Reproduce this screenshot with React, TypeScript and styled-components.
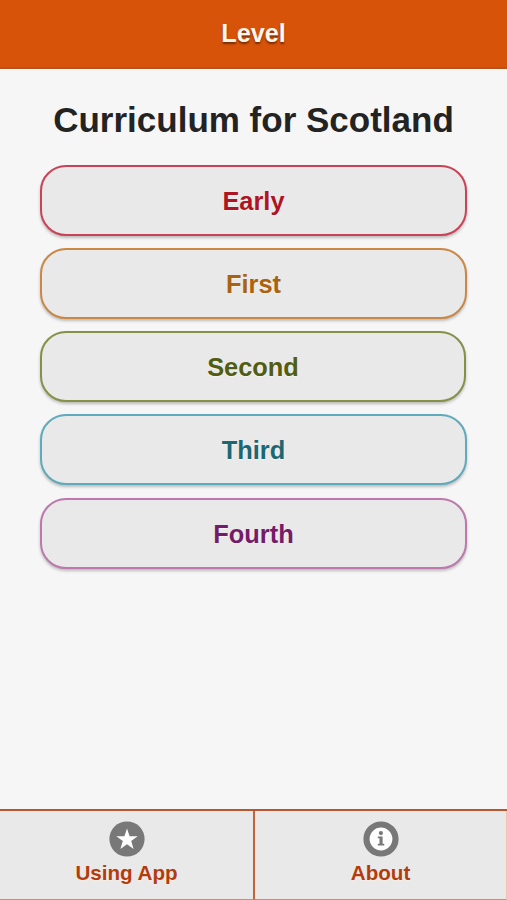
import React from "react";
import styled, { createGlobalStyle } from "styled-components";

const GlobalStyle = createGlobalStyle`
  * { box-sizing: border-box; }
  body {
    margin: 0;
    background: #f6f6f6;
    font-family: "Liberation Sans", Arial, Helvetica, sans-serif;
    font-weight: 700;
  }
`;

const Screen = styled.div`
  display: flex;
  flex-direction: column;
  width: 507px;
  height: 900px;
  overflow: hidden;
`;

const Header = styled.header`
  display: flex;
  align-items: center;
  justify-content: center;
  height: 69px;
  padding-bottom: 1px;
  background: #d7530a;
  border-bottom: 2px solid #b7531f;
  color: #fff5ec;
  font-size: 25.2px;
  line-height: 30px;
  text-shadow: 0 2px 2px rgba(70, 25, 0, 0.65);
`;

const Content = styled.main`
  flex: 1;
  padding: 30px 40px 0;
`;

const Title = styled.h1`
  margin: 0 -10px;
  font-size: 35px;
  line-height: 42px;
  color: #232323;
  text-align: center;
  white-space: nowrap;
`;

const Levels = styled.nav`
  display: flex;
  flex-direction: column;
  align-items: flex-start;
  gap: 12.25px;
  margin-top: 23.5px;
`;

const LevelButton = styled.button<{ $line: string; $ink: string; $width?: number }>`
  width: ${(p) => p.$width ?? 427}px;
  height: 71px;
  padding: 1px 0 0;
  border: 2px solid ${(p) => p.$line};
  border-radius: 26px;
  background: #e9e9e9;
  box-shadow: 0 2px 3px rgba(0, 0, 0, 0.24);
  color: ${(p) => p.$ink};
  font: 700 25.4px/30px "Liberation Sans", Arial, sans-serif;
  text-shadow: 0 1px 1px #f6f3ee;
`;

const Footer = styled.footer`
  display: grid;
  grid-template-columns: 255px 252px;
  height: 91px;
  border-top: 2px solid #b7562f;
`;

const Tab = styled.button`
  display: flex;
  flex-direction: column;
  align-items: center;
  padding: 10px 0 0;
  border: 0;
  border-right: 2px solid #c4623a;
  border-bottom: 1px solid #d98a63;
  background: #e9e9e9;
  color: #b23c0d;
  font: 700 20.6px/24px "Liberation Sans", Arial, sans-serif;
  text-shadow: 0 1px 1px #f9eee7;

  &:last-child {
    border-right: 1px solid #edc5b3;
  }

  svg {
    display: block;
    margin-bottom: 4px;
  }
`;

const StarIcon = () => (
  <svg width="36" height="36" viewBox="0 0 36 36">
    <circle cx="18" cy="18" r="17.6" fill="#787878" />
    <path
      d="M18 7.5 20.6 15.2 28.7 15.3 22.2 20.1 24.6 27.9 18 23.2 11.4 27.9 13.8 20.1 7.3 15.3 15.4 15.2Z"
      fill="#fff"
    />
  </svg>
);

const InfoIcon = () => (
  <svg width="36" height="36" viewBox="0 0 36 36">
    <circle cx="18" cy="18" r="14.5" fill="#fff" stroke="#787878" strokeWidth="6.2" />
    <circle cx="17.9" cy="12.1" r="2.1" fill="#787878" />
    <path d="M14.8 15.5H19.6V22.8H21.3V24.5H14.8V22.8H16.5V17.2H14.8Z" fill="#787878" />
  </svg>
);

const levels = [
  { name: "Early", line: "#c94358", ink: "#ae1423" },
  { name: "First", line: "#ca8846", ink: "#a9620f" },
  { name: "Second", line: "#849248", ink: "#515d13", width: 426 },
  { name: "Third", line: "#5eabbd", ink: "#1c6872" },
  { name: "Fourth", line: "#bd78ad", ink: "#751b69" },
];

export default function App() {
  return (
    <>
      <GlobalStyle />
      <Screen>
        <Header>Level</Header>
        <Content>
          <Title>Curriculum for Scotland</Title>
          <Levels>
            {levels.map((l) => (
              <LevelButton key={l.name} $line={l.line} $ink={l.ink} $width={l.width}>
                {l.name}
              </LevelButton>
            ))}
          </Levels>
        </Content>
        <Footer>
          <Tab>
            <StarIcon />
            Using App
          </Tab>
          <Tab>
            <InfoIcon />
            About
          </Tab>
        </Footer>
      </Screen>
    </>
  );
}
